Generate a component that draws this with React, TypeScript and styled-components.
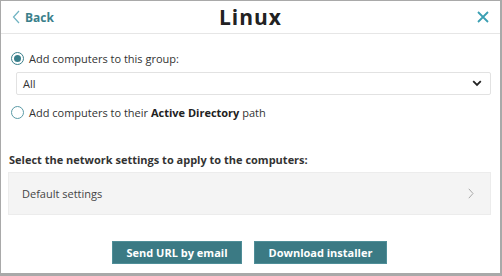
import React from 'react';
import styled, { createGlobalStyle } from 'styled-components';

const GlobalStyle = createGlobalStyle`
  html, body {
    margin: 0;
    padding: 0;
    background: #ffffff;
  }
  body {
    font-family: "Open Sans", "Noto Sans", sans-serif;
    color: #333333;
  }
  * {
    box-sizing: border-box;
  }
`;

const Frame = styled.div`
  width: 502px;
  height: 276px;
  border: 1px solid #a9a9a9;
  border-right-width: 2px;
  border-bottom-width: 3px;
  display: flex;
  flex-direction: column;
  background: #ffffff;
`;

const Header = styled.header`
  height: 33px;
  flex: none;
  display: grid;
  grid-template-columns: 1fr auto 1fr;
  align-items: center;
  padding: 0 11px;
  border-bottom: 1px solid #e6e6e6;
`;

const BackLink = styled.a`
  display: flex;
  align-items: center;
  gap: 5px;
  color: #3a7f8b;
  font-weight: 700;
  font-size: 12px;
  cursor: pointer;
  justify-self: start;
`;

const Title = styled.h1`
  margin: 0;
  font-size: 21px;
  letter-spacing: 1px;
  font-weight: 700;
  color: #222222;
`;

const CloseButton = styled.button`
  justify-self: end;
  border: 0;
  background: none;
  padding: 0;
  display: flex;
  cursor: pointer;
`;

const Body = styled.main`
  flex: 1;
  display: flex;
  flex-direction: column;
  padding: 15px 9px 0 7px;
`;

const RadioRow = styled.label`
  display: flex;
  align-items: center;
  gap: 5px;
  padding-left: 3px;
  font-size: 11px;
  color: #333333;
  height: 18px;
  b {
    font-weight: 700;
    color: #222222;
  }
`;

const RadioDot = styled.span<{ $checked?: boolean }>`
  width: 13px;
  height: 13px;
  border-radius: 50%;
  border: 1px solid ${(p) => (p.$checked ? '#3a7f8b' : '#5a9aa6')};
  display: flex;
  align-items: center;
  justify-content: center;
  &::after {
    content: '';
    width: 7px;
    height: 7px;
    border-radius: 50%;
    background: ${(p) => (p.$checked ? '#3a7f8b' : 'transparent')};
  }
`;

const Select = styled.div`
  margin: 5px 0 0 8px;
  height: 23px;
  border: 1px solid #e2e2e2;
  border-radius: 2px;
  display: flex;
  align-items: center;
  justify-content: space-between;
  padding: 0 8px 0 6px;
  font-size: 11px;
  color: #333333;
`;

const SecondRadio = styled(RadioRow)`
  margin-top: 8px;
`;

const SectionTitle = styled.h2`
  margin: 31px 0 0 1px;
  font-size: 11px;
  font-weight: 700;
  color: #333333;
  line-height: 16px;
`;

const SettingsRow = styled.div`
  margin-top: 4px;
  height: 43px;
  background: #f4f4f4;
  border: 1px solid #ececec;
  display: flex;
  align-items: center;
  justify-content: space-between;
  padding: 0 16px 0 13px;
  font-size: 11px;
  color: #444444;
`;

const Actions = styled.div`
  display: flex;
  justify-content: center;
  gap: 12px;
  margin-top: 26px;
`;

const ActionButton = styled.button<{ $width: number }>`
  width: ${(p) => p.$width}px;
  height: 23px;
  background: #3b7a84;
  border: 1px solid #4f8e98;
  color: #ffffff;
  font-family: "Open Sans", "Noto Sans", sans-serif;
  font-weight: 700;
  font-size: 11px;
  padding: 0;
  cursor: pointer;
`;

export default function App() {
  return (
    <>
      <GlobalStyle />
      <Frame>
        <Header>
          <BackLink>
            <svg width="8" height="14" viewBox="0 0 8 14">
              <path d="M7 1 L1.5 7 L7 13" fill="none" stroke="#6fb3c2" strokeWidth="1.2" />
            </svg>
            Back
          </BackLink>
          <Title>Linux</Title>
          <CloseButton aria-label="Close">
            <svg width="12" height="12" viewBox="0 0 12 12">
              <path d="M1 1 L11 11 M11 1 L1 11" stroke="#3b9fb3" strokeWidth="1.8" />
            </svg>
          </CloseButton>
        </Header>
        <Body>
          <RadioRow>
            <RadioDot $checked />
            Add computers to this group:
          </RadioRow>
          <Select>
            <span>All</span>
            <svg width="10" height="7" viewBox="0 0 10 7">
              <path d="M1.2 1.2 L5 5 L8.8 1.2" fill="none" stroke="#222" strokeWidth="1.8" />
            </svg>
          </Select>
          <SecondRadio>
            <RadioDot />
            <span>
              Add computers to their <b>Active Directory</b> path
            </span>
          </SecondRadio>
          <SectionTitle>Select the network settings to apply to the computers:</SectionTitle>
          <SettingsRow>
            <span>Default settings</span>
            <svg width="6" height="11" viewBox="0 0 6 11">
              <path d="M0.8 0.8 L5 5.5 L0.8 10.2" fill="none" stroke="#a8a8a8" strokeWidth="1" />
            </svg>
          </SettingsRow>
          <Actions>
            <ActionButton $width={130}>Send URL by email</ActionButton>
            <ActionButton $width={133}>Download installer</ActionButton>
          </Actions>
        </Body>
      </Frame>
    </>
  );
}
